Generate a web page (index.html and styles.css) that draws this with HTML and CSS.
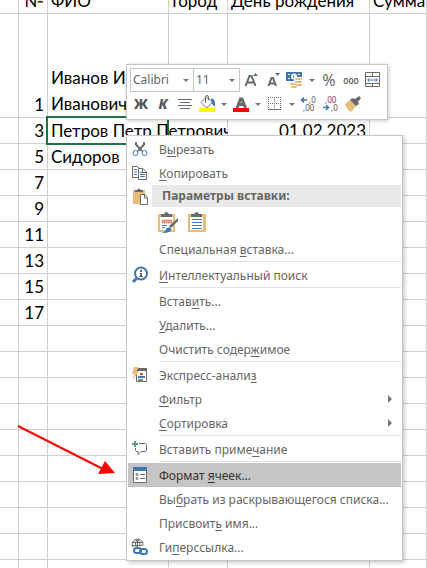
FILE: index.html
```html
<!DOCTYPE html>
<html lang="ru">
<head>
<meta charset="utf-8">
<meta name="viewport" content="width=device-width, initial-scale=1">
<title>Таблица</title>
<link rel="stylesheet" href="styles.css">
</head>
<body>
<main class="workspace">
<table class="sheet">
  <colgroup><col class="col-edge"><col class="col-num"><col class="col-name"><col class="col-city"><col class="col-date"><col></colgroup>
  <thead>
    <tr><th></th><th class="num">№</th><th>ФИО</th><th>Город</th><th>День рождения</th><th>Сумма</th></tr>
  </thead>
  <tbody>
    <tr class="tall"><td></td><td class="num">1</td><td class="wrap">Иванов Иван Иванович</td><td></td><td></td><td></td></tr>
    <tr><td></td><td class="num">3</td><td class="selected"><span class="value">Петров Петр Петрович</span></td><td></td><td class="num date">01.02.2023</td><td></td></tr>
    <tr><td></td><td class="num">5</td><td>Сидоров</td><td></td><td></td><td></td></tr>
    <tr><td></td><td class="num">7</td><td></td><td></td><td></td><td></td></tr>
    <tr><td></td><td class="num">9</td><td></td><td></td><td></td><td></td></tr>
    <tr><td></td><td class="num">11</td><td></td><td></td><td></td><td></td></tr>
    <tr><td></td><td class="num">13</td><td></td><td></td><td></td><td></td></tr>
    <tr><td></td><td class="num">15</td><td></td><td></td><td></td><td></td></tr>
    <tr><td></td><td class="num">17</td><td></td><td></td><td></td><td></td></tr>
    <tr><td></td><td></td><td></td><td></td><td></td><td></td></tr>
    <tr><td></td><td></td><td></td><td></td><td></td><td></td></tr>
    <tr><td></td><td></td><td></td><td></td><td></td><td></td></tr>
    <tr><td></td><td></td><td></td><td></td><td></td><td></td></tr>
    <tr><td></td><td></td><td></td><td></td><td></td><td></td></tr>
    <tr><td></td><td></td><td></td><td></td><td></td><td></td></tr>
    <tr><td></td><td></td><td></td><td></td><td></td><td></td></tr>
    <tr><td></td><td></td><td></td><td></td><td></td><td></td></tr>
    <tr><td></td><td></td><td></td><td></td><td></td><td></td></tr>
    <tr><td></td><td></td><td></td><td></td><td></td><td></td></tr>
  </tbody>
</table>

<div class="toolbar" role="toolbar" aria-label="Форматирование">
  <div class="tools">
    <div class="combo combo-font"><select aria-label="Шрифт"><option>Calibri</option></select></div>
    <div class="combo combo-size"><select aria-label="Размер"><option>11</option></select></div>
    <button class="tool" aria-label="Увеличить размер"><svg viewBox="0 0 22 24"><path d="M5.500 18 9.500 8h2l4 10M7 14.500h7" class="letter"/><path d="M13 8h5l-2.500-3z" class="blue"/></svg></button>
    <button class="tool" aria-label="Уменьшить размер"><svg viewBox="0 0 22 24"><path d="M6.500 18 9.500 10h1.500l3 8M7.500 15.500h5.500" class="letter"/><path d="M13 5h5l-2.500 3z" class="blue"/></svg></button>
    <button class="tool" aria-label="Денежный формат"><svg viewBox="0 0 22 24"><path d="M2 4h16v9H2z" class="blue"/><path d="M4 6h2v1H4zM14 6h2v1h-2zM4 10h2v1H4z" fill="#fff"/><circle cx="10" cy="8.500" r="3" fill="#fff"/><path d="M10 6.500q-2 2 0 4z" class="blue"/><path d="M10 9h9v11H5v-6h5z" fill="#fff"/><g class="tan"><rect x="11" y="10" width="7" height="2" rx="1"/><rect x="11" y="13" width="7" height="2" rx="1"/><rect x="12" y="16" width="6" height="2" rx="1"/><rect x="6" y="15" width="6" height="2" rx="1"/><rect x="7" y="18" width="6" height="2" rx="1"/></g></svg></button>
    <button class="drop" aria-label="Валюты"></button>
    <button class="tool percent">%</button>
    <button class="tool thousands">000</button>
    <button class="tool" aria-label="Объединить ячейки"><svg viewBox="0 0 22 24"><path d="M3.500 4.500h14v14h-14zM3.500 8.500h14M3.500 15.500h14M10.500 4.500v4M10.500 15.500v3" class="line"/><path d="M6 12h9M7.500 10l-2 2 2 2M13.500 10l2 2-2 2" class="blue-line"/></svg></button>
  </div>
  <div class="tools">
    <button class="tool bold">Ж</button>
    <button class="tool bold italic">К</button>
    <button class="tool" aria-label="По центру"><svg viewBox="0 0 22 24"><path d="M4 7.500h14M6 10.500h10M4 13.500h14M6 16.500h10" class="line"/></svg></button>
    <button class="tool" aria-label="Цвет заливки"><svg viewBox="0 0 22 24"><path d="M5 10.500 10.500 5l6 5-6 6zM9.500 11V5q0-1.500 1.500-1.500T12.500 5v3" class="line"/><path d="M15 6q5 1 4 9l-3-3z" class="blue"/><path d="M3 16h16v4H3z" fill="#ff0"/></svg></button>
    <button class="drop" aria-label="Цвета заливки"></button>
    <button class="tool" aria-label="Цвет текста"><svg viewBox="0 0 22 24"><path d="M7 16 10.500 7h1.500L15.500 16M8.500 12.500h6" class="letter heavy"/><path d="M3 16h16v4H3z" fill="#f00"/></svg></button>
    <button class="drop" aria-label="Цвета текста"></button>
    <button class="tool" aria-label="Границы"><svg viewBox="0 0 22 24"><path d="M4 5.500h13M4 11.500h13M4.500 5v12M10.500 5v12M16.500 5v12" class="line dotted"/><path d="M4 17.500h13" class="line"/></svg></button>
    <button class="drop" aria-label="Виды границ"></button>
    <button class="tool" aria-label="Увеличить разрядность"><svg viewBox="0 0 22 24"><path d="M9 8H4M6 5.500 3.500 8 6 10.500" class="blue-line firm"/><text x="11" y="11">,0</text><text x="5" y="19">,00</text></svg></button>
    <button class="tool" aria-label="Уменьшить разрядность"><svg viewBox="0 0 22 24"><text x="5" y="11">,00</text><path d="M3 15.500h5M6 13l2.500 2.500L6 18" class="blue-line firm"/><text x="11" y="19">,0</text></svg></button>
    <button class="tool" aria-label="Формат по образцу"><svg viewBox="0 0 22 24"><path d="M3 12 8 8l6 6-5 6q-4-2-6-8z" class="tan"/><path d="m8 8 2-2 3 1 4-3 2 2-3 4 1 2-3 2z" class="gray"/></svg></button>
  </div>
</div>

<div class="menu" role="menu">
  <button class="item" role="menuitem"><svg class="icon" viewBox="0 0 24 24"><path d="M8 5v2.500l6 6.500M16 5v2.500L10 14" class="line thick"/><circle cx="7.500" cy="16" r="2.500" class="blue-line"/><circle cx="16.500" cy="16" r="2.500" class="blue-line"/></svg><span>В<u>ы</u>резать</span></button>
  <button class="item" role="menuitem"><svg class="icon" viewBox="0 0 24 24"><path d="M10 16.500H4.500v-11H9l2.500 2M10.500 7.500H15l3.500 3.500v7.500h-8zM14.500 7.500v4h4" class="line"/><path d="M6 8.500h3M6 11h3M6 13.500h3M12 11.500h2M12 13.500h5M12 15.500h5" class="blue-line"/></svg><span><u>К</u>опировать</span></button>
  <div class="section"><svg class="icon" viewBox="0 0 24 24"><path d="M5 5h12v14H5z" class="tan"/><path d="M7 7V5h2q2-3 4 0h2v2z" class="gray"/><path d="M12.500 9.500H17l2.500 3v7h-7z" fill="#fff" class="line"/><path d="M16.500 9.500v3.500h3" class="line"/></svg><span class="section-title">Параметры вставки:</span></div>
  <div class="paste">
    <button class="paste-option" aria-label="Исходное форматирование"><svg viewBox="0 0 24 24"><path d="M2 4h17v18H2z" class="tan"/><path d="M4 7h13v13H4z" fill="#fff"/><path d="M5 7V4h3q2-4 5 0h3v3z" class="gray"/><path d="M6 10.500h10M6 12.500h10" stroke="#e24a2c" stroke-width="1.500" stroke-dasharray="1.500 .6"/><path d="M6 15.500h5M6 17.500h3" class="blue-line"/><path d="m13 16 9-8v3l-7 7z" class="gray"/><path d="M5 23q5-1 5-4 2-3 5-1 2 5-10 5z" class="blue"/></svg></button>
    <button class="paste-option" aria-label="Вставить"><svg viewBox="0 0 24 24"><path d="M4 4h18v18H4z" class="tan"/><path d="M6 7h13v13H6z" fill="#fff"/><path d="M7 7V4h3q3-4 5 0h3v3z" class="gray"/><path d="M8 9.500h10M8 12.500h10M8 15.500h10M8 18.500h10" class="blue-line"/></svg></button>
  </div>
  <button class="item" role="menuitem"><span class="icon"></span><span>Специальная <u>в</u>ставка...</span></button>
  <hr>
  <button class="item" role="menuitem"><svg class="icon" viewBox="0 0 24 24"><circle cx="13" cy="10.500" r="6" class="blue-line thick"/><path d="m9 15-4 4" class="blue-line handle"/><path d="M12 7h2v2h-2zM11.500 10H14v3h1v1h-4v-1h1v-2h-.5z" class="gray"/></svg><span><u>И</u>нтеллектуальный поиск</span></button>
  <hr>
  <button class="item" role="menuitem"><span class="icon"></span><span>Встав<u>и</u>ть...</span></button>
  <button class="item" role="menuitem"><span class="icon"></span><span><u>У</u>далить...</span></button>
  <button class="item" role="menuitem"><span class="icon"></span><span>Очистить содер<u>ж</u>имое</span></button>
  <hr>
  <button class="item" role="menuitem"><svg class="icon" viewBox="0 0 24 24"><path d="M8.500 7v11.500h10V7" class="line"/><path d="M9 5h10v3H9z" class="gray"/><path d="M6 4h5L8.500 8H11l-6 9 1.500-6H4z" class="tan"/><path d="M12 10h3v2h-3z" fill="#e24a2c"/><path d="M10 13h7v2h-7z" class="blue"/><path d="M10 16h5v2h-5z" class="green"/></svg><span>Экспресс-анали<u>з</u></span></button>
  <button class="item" role="menuitem"><span class="icon"></span><span><u>Ф</u>ильтр</span><svg class="more" viewBox="0 0 4 8"><path d="M0 0v8l4-4z"/></svg></button>
  <button class="item" role="menuitem"><span class="icon"></span><span><u>С</u>ортировка</span><svg class="more" viewBox="0 0 4 8"><path d="M0 0v8l4-4z"/></svg></button>
  <hr>
  <button class="item" role="menuitem"><svg class="icon" viewBox="0 0 24 24"><path d="M11 6.500h6.500l1 1v6l-1 1H13l-3 3v-3H8.500l-1-1V11" class="line"/><path d="M6 4h2v2h2v2H8v2H6V8H4V6h2z" class="green"/></svg><span>Вставить приме<u>ч</u>ание</span></button>
  <hr>
  <button class="item active" role="menuitem"><svg class="icon" viewBox="0 0 24 24"><path d="M5.500 6.500h13v13h-13z" fill="#fff" class="line"/><path d="M5 4h14v4H5z" class="blue"/><path d="M12 11.500h5M12 15.500h5" class="line"/><circle cx="9" cy="11.500" r="1" class="line"/><circle cx="9" cy="15.500" r="1" class="line"/></svg><span>Формат <u>я</u>чеек...</span></button>
  <button class="item" role="menuitem"><span class="icon"></span><span>Вы<u>б</u>рать из раскрывающегося списка...</span></button>
  <button class="item" role="menuitem"><span class="icon"></span><span>Присвоит<u>ь</u> имя...</span></button>
  <button class="item" role="menuitem"><svg class="icon" viewBox="0 0 24 24"><path d="M5 12.500a5.500 5.500 0 1 1 10-2M4.500 7.500h10M4.500 10.500h10M8 12q-2-5 1.500-8 3.500 3 2.500 7M9.500 4v8" class="line"/><rect x="6" y="13" width="7" height="5" rx="2.500" class="blue-line thick"/><rect x="12" y="14" width="7" height="5" rx="2.500" class="blue-line thick"/></svg><span>Ги<u>п</u>ерссылка...</span></button>
</div>

<svg class="pointer" viewBox="0 0 100 52" aria-hidden="true"><path d="m1 3 85 43" stroke="#f00" stroke-width="2"/><path d="M88 38 81 51l17-1z" fill="#f00"/></svg>
</main>
</body>
</html>
```

FILE: styles.css
```css
* { box-sizing: border-box; }
body { margin: 0; background: #fff; color: #000; font-family: "Noto Sans", "Open Sans", sans-serif; }
.workspace { position: relative; height: 100vh; overflow: hidden; }

.sheet { width: 100%; margin-top: -12px; table-layout: fixed; border-collapse: separate; border-spacing: 0; font-family: Lato, "Noto Sans", sans-serif; font-size: 17px; line-height: 26px; }
.col-edge { width: 19px; }
.col-num { width: 29px; }
.col-name { width: 121px; }
.col-city { width: 59px; }
.col-date { width: 142px; }
.sheet th, .sheet td { height: 26px; padding: 0 3px; border-right: 1px solid #d0d0d0; border-bottom: 1px solid #d0d0d0; text-align: left; vertical-align: bottom; font-weight: 400; line-height: 25px; white-space: nowrap; }
.sheet .num { text-align: right; }
.sheet .tall td { height: 104px; }
.sheet .wrap { white-space: normal; line-height: 26px; }
.sheet .selected { position: relative; }
.selected::before { content: ""; position: absolute; inset: -2px -1px -2px -2px; border: 2px solid #217346; }
.value { position: relative; }
.sheet .date { position: relative; background: #fff; }

button { margin: 0; padding: 0; border: 0; background: none; color: inherit; font: inherit; }
svg { display: block; fill: none; }
.line { stroke: #6a6a6a; stroke-width: 1; }
.blue-line { stroke: #3f78b5; stroke-width: 1; }
.firm { stroke-width: 1.5; }
.thick { stroke-width: 2; }
.handle { stroke-width: 3; }
.letter { stroke: #6a6a6a; stroke-width: 2; }
.heavy { stroke-width: 3; }
.dotted { stroke-dasharray: 1 1; }
.blue { fill: #3f78b5; }
.tan { fill: #e8bd7a; }
.gray { fill: #6a6a6a; }
.green { fill: #5aa087; }

.toolbar { position: absolute; left: 126px; top: 64px; padding: 3px; border: 1px solid #c6c6c6; background: #fff; box-shadow: 1px 1px 4px #0003; color: #666; font-size: 12px; }
.tools { display: flex; height: 24px; }
.combo { position: relative; height: 24px; border: 1px solid #c6c6c6; }
.combo-font { width: 64px; }
.combo-size { width: 47px; margin-left: -1px; }
.combo select { width: 100%; height: 20px; padding: 0 2px; border: 0; appearance: none; background: none; color: #666; font: inherit; }
.combo::after { content: ""; position: absolute; right: 4px; top: 10px; border: 3px solid transparent; border-top-color: #777; border-bottom: 0; }
.tool { display: grid; place-items: center; width: 22px; height: 24px; }
.tool svg { width: 22px; height: 24px; }
.tool text { fill: #555; font-size: 8px; }
.drop { display: grid; place-items: center; width: 12px; height: 24px; }
.drop::before { content: ""; border: 3px solid transparent; border-top-color: #777; border-bottom: 0; }
.percent { font-size: 16px; }
.thousands { font-size: 9px; font-weight: 600; }
.bold { font-size: 14px; font-weight: 800; color: #555; line-height: 20px; }
.italic { font-style: italic; }

.menu { position: absolute; left: 126px; top: 135px; width: 277px; padding: 1px; border: 1px solid #c6c6c6; background: #fff; box-shadow: 2px 2px 4px #0003; color: #666; font-size: 12px; }
.item { display: flex; align-items: center; width: 100%; height: 24px; text-align: left; white-space: nowrap; }
.item.active { background: #c5c5c5; color: #333; }
.icon { flex: none; width: 24px; height: 24px; }
.item .icon { margin-right: 7px; }
.item u { text-underline-offset: 2px; }
.more { width: 4px; height: 8px; margin-left: auto; margin-right: 9px; fill: #777; }
.menu hr { height: 2px; margin: 0 0 0 32px; border: 0; border-top: 1px solid #e0e0e0; }
.section { display: flex; height: 22px; }
.section-title { flex: 1; padding-left: 10px; background: #eaeaea; font-weight: 700; line-height: 22px; }
.paste { display: flex; gap: 4px; height: 30px; padding: 3px 0 0 28px; }
.paste-option, .paste-option svg { width: 24px; height: 24px; }

.pointer { position: absolute; left: 17px; top: 423px; width: 100px; height: 52px; }
```
